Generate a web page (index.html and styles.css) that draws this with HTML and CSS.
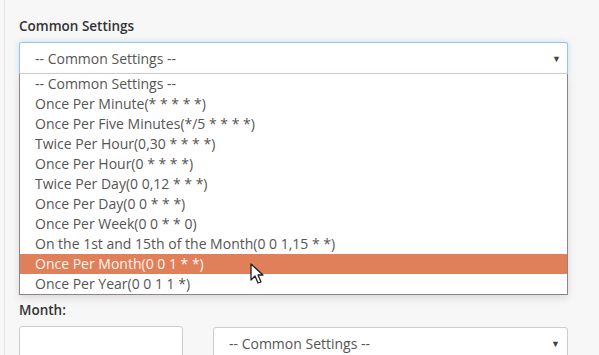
FILE: index.html
```html
<!DOCTYPE html>
<html lang="en">
<head>
    <meta charset="UTF-8">
    <meta name="viewport" content="width=device-width, initial-scale=1.0">
    <title>Cron Settings</title>
    <link rel="stylesheet" href="styles.css">
</head>
<body>

<div class="page">
    <label class="field-label">Common Settings</label>
    <div class="select focused">
        <span>-- Common Settings --</span>
        <span class="caret">&#9660;</span>
    </div>

    <ul class="options">
        <li>-- Common Settings --</li>
        <li>Once Per Minute(* * * * *)</li>
        <li>Once Per Five Minutes(*/5 * * * *)</li>
        <li>Twice Per Hour(0,30 * * * *)</li>
        <li>Once Per Hour(0 * * * *)</li>
        <li>Twice Per Day(0 0,12 * * *)</li>
        <li>Once Per Day(0 0 * * *)</li>
        <li>Once Per Week(0 0 * * 0)</li>
        <li>On the 1st and 15th of the Month(0 0 1,15 * *)</li>
        <li class="active">Once Per Month(0 0 1 * *)
            <svg class="cursor" width="16" height="22" viewBox="0 0 16 22">
                <path d="M1 1 L1 17 L5 13 L8 20 L11 19 L8 12 L13 12 Z" fill="#fff" stroke="#222" stroke-width="1.3" stroke-linejoin="round"/>
            </svg>
        </li>
        <li>Once Per Year(0 0 1 1 *)</li>
    </ul>

    <label class="field-label month">Month:</label>
    <div class="row">
        <input type="text" class="text-input">
        <div class="select wide">
            <span>-- Common Settings --</span>
            <span class="caret">&#9660;</span>
        </div>
    </div>
</div>

</body>
</html>
```

FILE: styles.css
```css
body {
    margin: 0;
    padding: 0;
    background-color: #f7f7f7;
    font-family: "Open Sans", Arial, sans-serif;
    color: #333;
    overflow: hidden;
}

.page {
    border-left: 1px solid #e6e6e6;
    margin-left: 4px;
    padding: 17px 31px 0 14px;
    height: 355px;
    box-sizing: border-box;
}

.field-label {
    display: block;
    font-size: 13.5px;
    font-weight: 600;
    line-height: 18px;
    margin-bottom: 7px;
}

.select {
    display: flex;
    align-items: center;
    justify-content: space-between;
    height: 32px;
    box-sizing: border-box;
    padding: 0 6px 0 15px;
    background-color: #fff;
    border: 1px solid #ccc;
    border-radius: 3px;
    font-size: 14px;
    color: #555;
}

.select.focused {
    border-color: #9cc3e6;
    border-bottom-color: #d9cfcc;
    border-radius: 3px 3px 0 0;
    box-shadow: 0 0 6px rgba(102, 175, 233, 0.35);
}

.caret {
    font-size: 9px;
    color: #444;
}

.options {
    list-style: none;
    margin: 0;
    padding: 0;
    background-color: #fff;
    border: 1px solid #8f8482;
    border-top: none;
    box-shadow: 0 3px 8px rgba(0, 0, 0, 0.12);
}

.options li {
    position: relative;
    height: 20px;
    line-height: 20px;
    padding-left: 15px;
    font-size: 14px;
    color: #555;
    white-space: nowrap;
}

.options li.active {
    background-color: #e0805a;
    color: #fdf3ee;
}

.cursor {
    position: absolute;
    left: 230px;
    top: 9px;
}

.month {
    margin-top: 6px;
}

.row {
    display: flex;
    gap: 30px;
}

.text-input {
    width: 164px;
    height: 34px;
    box-sizing: border-box;
    border: 1px solid #ccc;
    border-radius: 3px;
    background-color: #fff;
    margin: 0;
}

.select.wide {
    flex: 1;
    height: 32px;
    margin-top: 1px;
    padding-right: 7px;
}
```
